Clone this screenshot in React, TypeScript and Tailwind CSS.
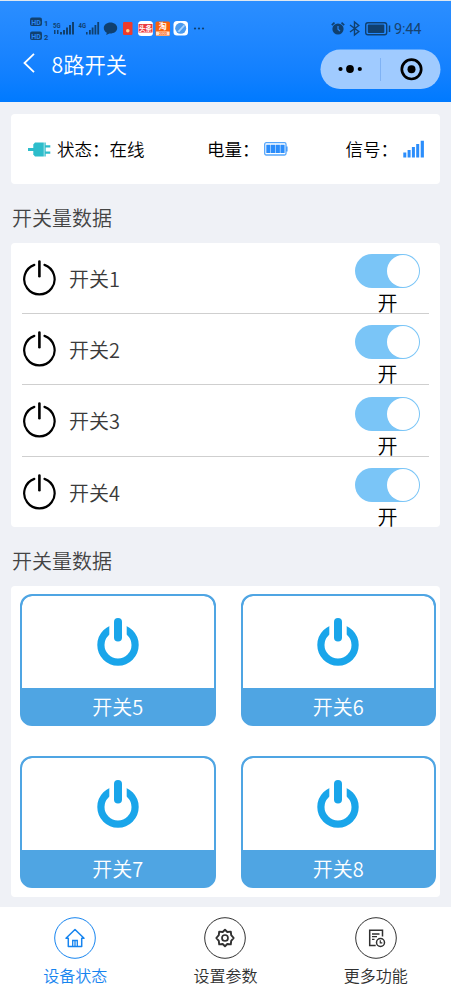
import type { ReactNode } from 'react';

const SWITCHES = ['开关1', '开关2', '开关3', '开关4'];
const TILES = ['开关5', '开关6', '开关7', '开关8'];

function StatusBar() {
  return (
    <div className="flex h-[27px] items-center justify-between pl-[29px] pr-[30px]">
      <svg width="180" height="27" viewBox="29 14 180 27" fontFamily="Roboto, sans-serif" fontWeight="700" fill="#10406f">
        <rect x="30" y="17.500" width="12" height="8.500" rx="2" />
        <text x="31.300" y="24.800" fontSize="8" textLength="9.500" lengthAdjust="spacingAndGlyphs" fill="#2a88f5">HD</text>
        <text x="44" y="26" fontSize="7.500">1</text>
        <rect x="30" y="31.500" width="12" height="8.500" rx="2" />
        <text x="31.300" y="38.800" fontSize="8" textLength="9.500" lengthAdjust="spacingAndGlyphs" fill="#2a88f5">HD</text>
        <text x="44" y="40" fontSize="7.500">2</text>
        <text x="53" y="27.500" fontSize="8" textLength="7.500" lengthAdjust="spacingAndGlyphs">5G</text>
        <path d="M54 30h1.500v4h-1.500zM57 30h1.500v4h-1.500zM60 32h2v2.500h-2zM63 30h2v4.500h-2zM66 27.500h2v7h-2zM69 25h2v9.500h-2zM72 22h2v12.500h-2z" />
        <text x="78.500" y="27.500" fontSize="8" textLength="7.500" lengthAdjust="spacingAndGlyphs">4G</text>
        <path d="M86 32h1.600v2.500h-1.600zM89 30h1.800v4.500h-1.800zM91.700 27.500h1.800v7h-1.800zM94.500 25h1.800v9.500h-1.800zM97.300 22h1.800v12.500h-1.800z" />
        <path d="M110.500 22.500c-3.800 0-6.700 2.400-6.700 5.500 0 2.100 1.200 3.800 3 4.800l-.6 2.200 3.200-1.500c4.400.3 7.800-2 7.800-5.500 0-3.100-2.900-5.500-6.700-5.500z" />
        <rect x="123" y="22" width="9.500" height="13" rx="1.200" fill="#ee3a2c" />
        <circle cx="127.800" cy="30.700" r="1.800" fill="#ffd08a" />
        <rect x="138" y="21" width="15" height="15" rx="3.500" fill="#fff" />
        <rect x="138.500" y="24" width="14" height="8.500" fill="#ec3b40" />
        <text x="139" y="30.800" fontSize="6.500" fill="#fff" fontFamily="Noto Sans CJK SC, sans-serif">头条</text>
        <rect x="155.500" y="21.500" width="14.500" height="14.500" rx="1.500" fill="#f9620d" />
        <rect x="156" y="31.500" width="13.500" height="4" fill="#ffe3cf" />
        <text x="158.700" y="29.300" fontSize="8" fill="#fff" fontFamily="Noto Sans CJK SC, sans-serif">淘</text>
        <text x="159" y="35.200" fontSize="3.500" fill="#f9620d">2020</text>
        <rect x="173.500" y="21" width="14.500" height="14.500" rx="3.500" fill="#fff" />
        <circle cx="180.700" cy="28.300" r="5.500" fill="#4b9bef" />
        <path d="M177.500 31.500l6.500-7 .9 1.500-5.500 6z" fill="#a9d4ff" />
        <circle cx="195" cy="28.500" r="1.100" />
        <circle cx="199" cy="28.500" r="1.100" />
        <circle cx="203" cy="28.500" r="1.100" />
      </svg>
      <div className="flex items-center">
        <svg width="62" height="27" viewBox="330 14 62 27" fill="none" stroke="#10406f" strokeWidth="1.400">
          <circle cx="338" cy="29" r="5.600" fill="#10406f" stroke="none" />
          <path d="M338 26v3.200l2 2" stroke="#2685fb" strokeWidth="1.200" />
          <path d="M331.800 25.200l2.700-2.500M344.200 25.200l-2.700-2.500" strokeWidth="1.700" />
          <path d="M350 25l8.800 6.500-4.300 3.500v-13l4.300 3.500-8.800 6.500" />
          <rect x="365.700" y="22.700" width="21" height="12" rx="2.200" />
          <rect x="367.800" y="24.500" width="16.500" height="8.500" rx="1" fill="#10406f" stroke="none" />
          <path d="M389.500 25.500v6.500" strokeWidth="1.500" />
        </svg>
        <span className="ml-[2px] mt-[5px] w-[27px] whitespace-nowrap font-[Roboto] text-[14.500px] leading-none tracking-[-0.2px] text-[#17426f]">9:44</span>
      </div>
    </div>
  );
}

function Header() {
  return (
    <header className="h-[102px] border-t border-[#dfe8f0] bg-linear-to-b from-[#2b8eff] to-[#007aff] pt-[13px]">
      <StatusBar />
      <div className="flex h-[56px] items-center pl-[23px] pr-[10px]">
        <svg width="13" height="20" viewBox="0 0 13 20" className="-mt-[12px]" fill="none" stroke="#fff" strokeWidth="1.800">
          <path d="M11 .8L1.500 10l9.500 9.200" />
        </svg>
        <h1 className="-mt-[10px] ml-[15.500px] text-[21.300px] font-[350] leading-none text-white">8路开关</h1>
        <svg width="121" height="40" viewBox="0 0 121 40" className="ml-auto">
          <rect x=".5" y=".5" width="120" height="39.500" rx="19.700" fill="#a0cbff" />
          <path d="M60.500 9v23" stroke="#7fb2f4" />
          <circle cx="20.500" cy="20" r="2.100" />
          <circle cx="30" cy="20" r="3.900" />
          <circle cx="39.800" cy="20" r="2.100" />
          <circle cx="91.500" cy="20.300" r="9.700" fill="none" stroke="#000" strokeWidth="2.700" />
          <circle cx="91.500" cy="20.300" r="4" />
        </svg>
      </div>
    </header>
  );
}

function StatusCard() {
  return (
    <section className="mt-3 flex h-[70px] items-center justify-between rounded bg-white pl-[17px] pr-[15px] text-[17.500px] font-[350] leading-none text-black">
      <div className="flex items-center">
        <svg width="23" height="15" viewBox="0 0 23 15" fill="#2dbdcb">
          <path d="M0 6h7v3H0z" />
          <path d="M7 .5h8.800v14H7L5.300 12.500V2.500z" />
          <path d="M16.400 .5h1.300v14h-1.300zM17 3.200h5.300v2.400H17zM17 9.400h5.300v2.400H17z" />
        </svg>
        <span className="ml-[6px]">状态：在线</span>
      </div>
      <div className="ml-[5px] flex items-center">
        <span>电量：</span>
        <svg width="24" height="14" viewBox="0 0 24 14" className="ml-[4.500px]">
          <rect x=".7" y=".7" width="21.300" height="12.300" rx="1.500" fill="#fff" stroke="#55a6fb" strokeWidth="1.300" />
          <path d="M2.300 2.700h4.200v8.300H2.300zM7 2.700h4.200v8.300H7zM11.700 2.700h4.200v8.300h-4.200zM16.400 2.700h4.200v8.300h-4.200zM22.300 4.500h1.200v5h-1.200z" fill="#2b8dfb" />
        </svg>
      </div>
      <div className="flex items-center">
        <span>信号：</span>
        <svg width="22" height="18" viewBox="0 0 22 18" className="ml-[5px]" fill="#2b8dfb">
          <path d="M.3 12.500h3v5h-3zM4.600 10h3v7.500h-3zM8.900 7h3v10.500h-3zM13.200 4h3v13.500h-3zM17.700 .7h3.200v16.800h-3.200z" />
        </svg>
      </div>
    </section>
  );
}

function SwitchRow({ name, last }: { name: string; last: boolean }) {
  return (
    <div className={`flex h-[71.400px] justify-between border-[#cfcfcf] ${last ? '' : 'border-b-[1.500px]'}`}>
      <div className="flex items-center">
        <svg width="35" height="38" viewBox="0 0 35 38" fill="none" stroke="#000" strokeWidth="2.200" strokeLinecap="round">
          <path d="M12.300 5.900A15.200 15.200 0 1 0 22.500 5.900" />
          <path d="M17.400 2.500v14.700" strokeWidth="2.600" />
        </svg>
        <span className="ml-3 mt-[2px] text-[20px] font-[350] leading-none text-[#3a3a3a]">{name}</span>
      </div>
      <div className="mr-[9px] flex w-[65px] flex-col items-center pt-[11.500px]">
        <div className="flex h-[34px] w-[65px] shrink-0 items-center justify-end rounded-full bg-[#7ac5f7] pr-[1px]">
          <div className="size-[32px] rounded-full bg-white" />
        </div>
        <span className="mt-[5px] text-[20px] font-[350] leading-[20px] text-black">开</span>
      </div>
    </div>
  );
}

function Tile({ name }: { name: string }) {
  return (
    <div className="flex h-[132px] flex-col overflow-hidden rounded-xl border-2 border-[#4fa5e3] bg-[#4fa5e3]">
      <div className="flex h-[92px] shrink-0 items-center justify-center rounded-t-[10px] bg-white">
        <svg width="42" height="50" viewBox="0 0 42 50" fill="none" stroke="#19a5ea">
          <circle cx="21" cy="28" r="17.100" strokeWidth="7.200" />
          <path d="M12.300 0h17.400v24H12.300z" stroke="none" fill="#fff" />
          <path d="M21 5v15.500" strokeWidth="8" strokeLinecap="round" />
        </svg>
      </div>
      <div className="flex flex-1 items-center justify-center pt-[2px] text-[20px] font-[350] leading-none text-white">{name}</div>
    </div>
  );
}

function Tab({ label, active, children }: { label: string; active?: boolean; children: ReactNode }) {
  return (
    <button className={`flex flex-1 flex-col items-center pt-[10px] ${active ? 'text-[#1684ef]' : 'text-[#303030]'}`}>
      <svg width="42" height="42" viewBox="0 0 42 42" fill="none" stroke="currentColor" strokeWidth="1.500">
        <circle cx="21" cy="21" r="20.300" strokeWidth="1" />
        {children}
      </svg>
      <span className="mt-[7px] text-[16px] font-[350] leading-[18px]">{label}</span>
    </button>
  );
}

export default function App() {
  return (
    <div className="flex h-[995px] w-[451px] flex-col overflow-hidden bg-[#eff1f6] font-['Noto_Sans_CJK_SC',sans-serif]">
      <Header />
      <main className="flex-1 pl-[11px] pr-[11px]">
        <StatusCard />
        <h2 className="mt-[24px] h-[34.500px] pl-[1px] text-[20px] font-[350] leading-[20px] text-[#444]">开关量数据</h2>
        <section className="h-[284.500px] rounded bg-white px-[11px]">
          {SWITCHES.map((name, i) => (
            <SwitchRow key={name} name={name} last={i === SWITCHES.length - 1} />
          ))}
        </section>
        <h2 className="mt-[24px] h-[35px] pl-[1px] text-[20px] font-[350] leading-[20px] text-[#444]">开关量数据</h2>
        <section className="grid h-[311px] grid-cols-2 content-start gap-x-[25px] gap-y-[30px] rounded bg-white pl-[9px] pr-[4px] pt-[8.400px]">
          {TILES.map((name) => (
            <Tile key={name} name={name} />
          ))}
        </section>
      </main>
      <nav className="flex h-[88px] bg-white">
        <Tab label="设备状态" active>
          <path d="M12 21.300L21 12.500l9 8.800h-2.300v8.200H14.300v-8.200z" strokeLinejoin="round" />
          <path d="M18.700 29.500v-6h4.600v6M21 24v5" strokeWidth="1.300" />
        </Tab>
        <Tab label="设置参数">
          <path d="M21 12.800l2.300 2.200 3.500-.4.400 3.500 2.500 2.900-2.500 2.900-.4 3.500-3.500-.4-2.300 2.200-2.300-2.200-3.500.4-.4-3.500-2.500-2.900 2.500-2.900.4-3.500 3.500.4z" strokeWidth="1.900" strokeLinejoin="round" />
          <circle cx="21" cy="21" r="3" strokeWidth="1.700" />
        </Tab>
        <Tab label="更多功能">
          <path d="M27.500 19.500v-6.200H14.700v15.200h6" />
          <path d="M17 17h7.500M17 19.700h5M17 22.300h2.500" strokeWidth="1.300" />
          <circle cx="25.500" cy="25.500" r="4" />
          <path d="M25.300 23.200v2.600h2" strokeWidth="1.200" />
        </Tab>
      </nav>
    </div>
  );
}
